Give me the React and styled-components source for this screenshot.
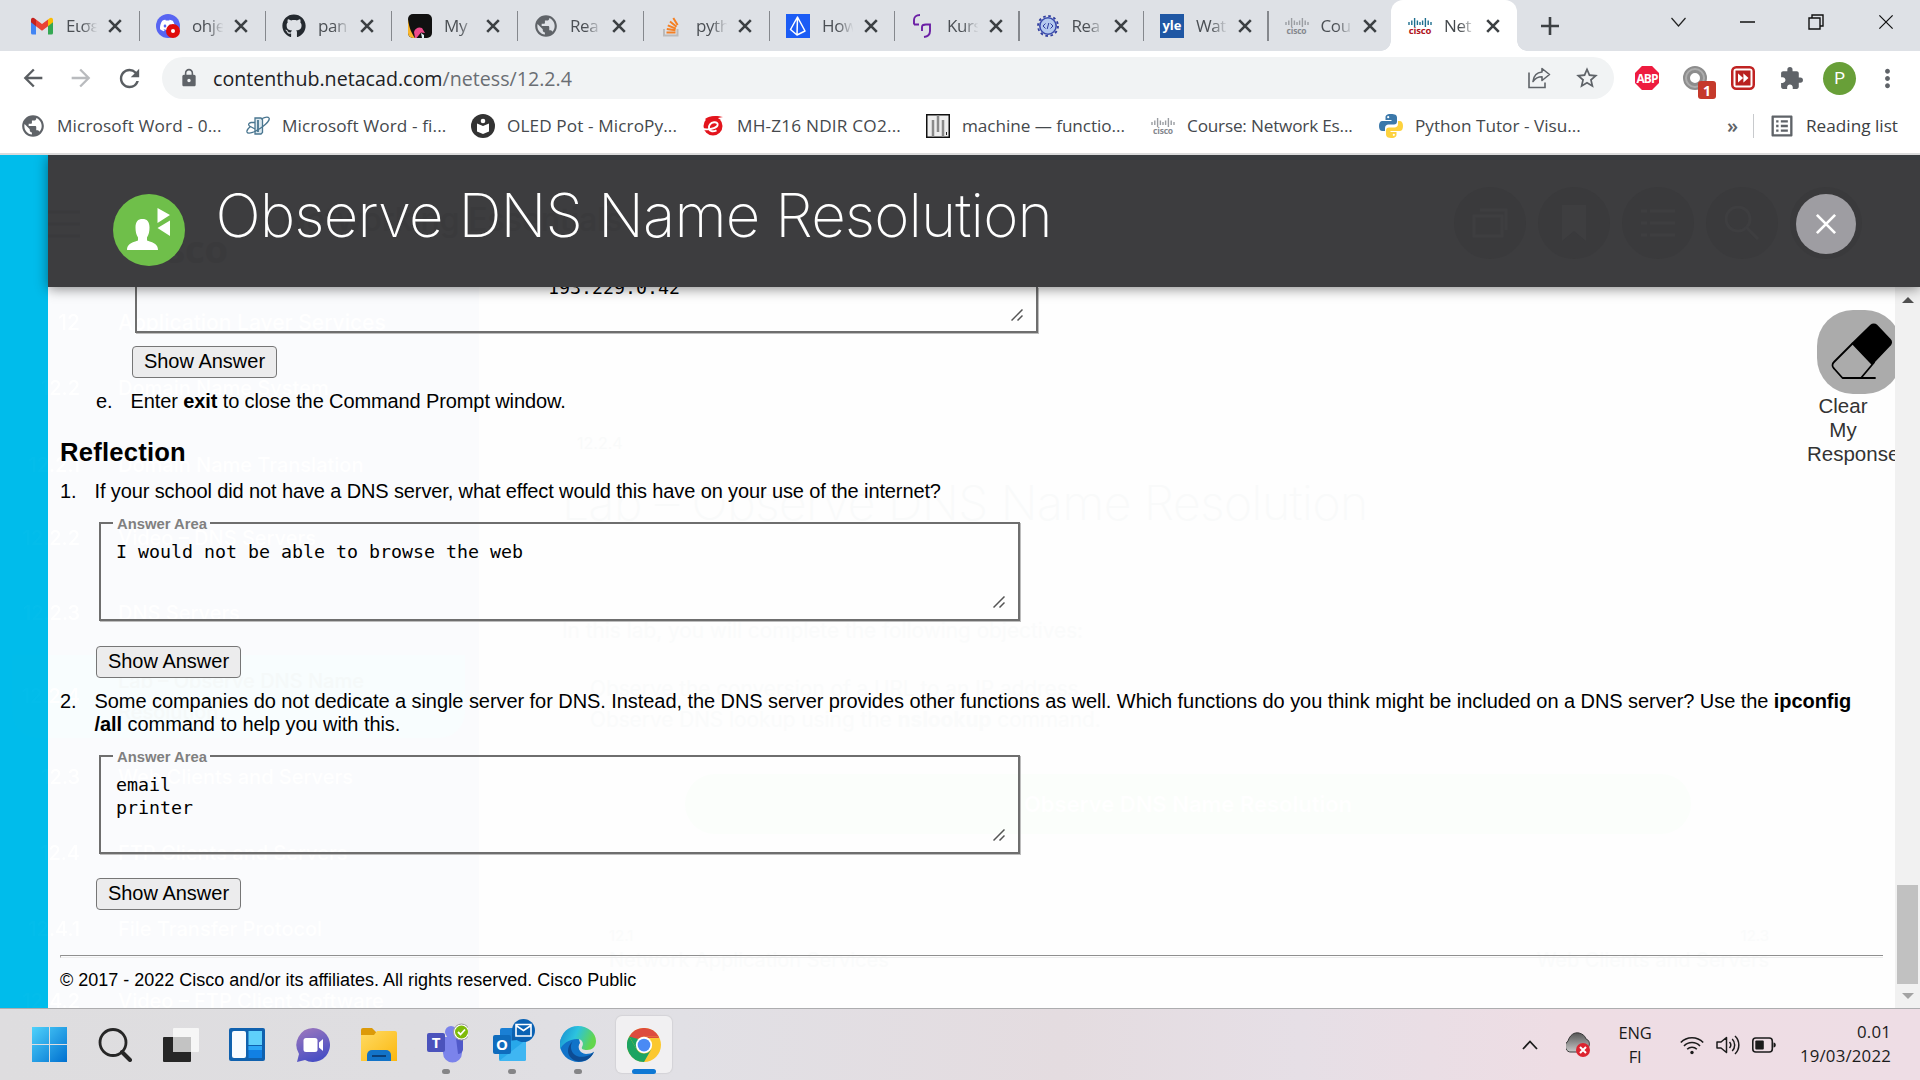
import React from "react";
import styled, { createGlobalStyle } from "styled-components";
import { FaGithub } from "react-icons/fa";
import { MdArrowBack, MdArrowForward, MdRefresh, MdLock, MdStarBorder, MdExtension, MdMoreVert, MdPublic, MdOutlineListAlt } from "react-icons/md";
import { SiDiscord } from "react-icons/si";

const GlobalStyle = createGlobalStyle`
  * { box-sizing: border-box; }
  body { margin: 0; background: #fff; overflow: hidden; }
  svg { display: block; flex: none; }
`;

const ui = `"Open Sans", "Noto Sans", sans-serif`;
const arial = `"Liberation Sans", Arial, sans-serif`;
const mono = `"DejaVu Sans Mono", monospace`;
const inter = `Inter, "Open Sans", sans-serif`;

const Screen = styled.div`
  width: 1920px;
  height: 1080px;
  display: flex;
  flex-direction: column;
  overflow: hidden;
  font-family: ${ui};
`;

/* ---------- browser chrome ---------- */

const TabStrip = styled.div`
  height: 51px;
  background: #dee1e6;
  display: flex;
  padding-left: 13px;
`;

const Tab = styled.div`
  width: ${(p) => p.$w}px;
  height: 51px;
  flex: none;
  position: relative;
  display: flex;
  align-items: center;
  padding-left: 17px;
  background: ${(p) => (p.$active ? "#fff" : "transparent")};
  border-radius: 12px 12px 0 0;
  &::after {
    content: "";
    position: absolute;
    right: -1px;
    top: 11px;
    width: 1.5px;
    height: 30px;
    background: ${(p) => (p.$active || p.$last ? "transparent" : "#85888d")};
  }
`;

const TabCorner = styled.i`
  position: absolute;
  bottom: 0;
  width: 10px;
  height: 10px;
  ${(p) => (p.$left ? "left: -10px;" : "right: -10px;")}
  background: radial-gradient(circle at ${(p) => (p.$left ? "0 0" : "100% 0")}, transparent 9.5px, #fff 10px);
`;

const TabIcon = styled.span`
  width: 24px;
  display: flex;
  justify-content: center;
`;

const TabTitle = styled.span`
  margin-left: 12px;
  width: 31px;
  overflow: hidden;
  white-space: nowrap;
  font-size: 17px;
  line-height: 24px;
  letter-spacing: -0.4px;
  color: ${(p) => (p.$active ? "#45494d" : "#4b4f54")};
  mask-image: linear-gradient(90deg, #000 50%, transparent 102%);
`;

const TabClose = styled.span`
  margin-left: 11px;
`;

const NewTab = styled.div`
  width: 60px;
  margin-left: 3px;
  display: flex;
  align-items: center;
  justify-content: center;
`;

const WindowControls = styled.div`
  margin-left: auto;
  height: 43px;
  display: flex;
  align-items: center;
  gap: 53.5px;
  padding-right: 26.5px;
`;

const Toolbar = styled.div`
  height: 54px;
  display: flex;
  align-items: center;
  background: #fff;
`;

const NavButtons = styled.div`
  width: 162px;
  display: flex;
  gap: 20px;
  padding-left: 19px;
  color: #5a5e62;
`;

const NavButton = styled.span`
  width: 28px;
  color: ${(p) => (p.$off ? "#b9bbbe" : "#5a5e62")};
`;

const Omnibox = styled.div`
  width: 1452px;
  height: 42px;
  border-radius: 21px;
  background: #f1f3f4;
  display: flex;
  align-items: center;
  padding: 0 14px 0 17px;
  color: #5f6368;
`;

const Url = styled.span`
  margin-left: 14px;
  flex: 1;
  padding-top: 1px;
  font-size: 19.65px;
  line-height: 28px;
  color: #6a6e73;
  b { font-weight: 400; color: #202124; }
`;

const OmniActions = styled.span`
  display: flex;
  align-items: center;
  gap: 23px;
`;

const Extensions = styled.div`
  display: flex;
  align-items: center;
  padding-left: 21px;
  color: #5f6368;
`;

const ExtSlot = styled.span`
  width: ${(p) => p.$w || 48}px;
  position: relative;
`;

const AbpBadge = styled.span`
  width: 24px;
  height: 24px;
  display: flex;
  align-items: center;
  justify-content: center;
  background: #ee1c3f;
  clip-path: polygon(29% 0, 71% 0, 100% 29%, 100% 71%, 71% 100%, 29% 100%, 0 71%, 0 29%);
  color: #fff;
  font-size: 12px;
  font-weight: 700;
  letter-spacing: -0.9px;
`;

const CountBadge = styled.span`
  position: absolute;
  left: 15px;
  top: 15px;
  width: 18px;
  height: 18px;
  border-radius: 3px;
  background: #c5392b;
  color: #fff;
  font-size: 14px;
  font-weight: 700;
  line-height: 19px;
  text-align: center;
`;

const Avatar = styled.span`
  display: block;
  width: 33px;
  height: 33px;
  border-radius: 50%;
  background: #689f38;
  color: #fff;
  font: 17px/33px Roboto, sans-serif;
  text-align: center;
`;

const BookmarkBar = styled.div`
  height: 50px;
  display: flex;
  align-items: center;
  padding: 0 0 7px 21px;
  border-bottom: 2px solid #dadbdc;
  background: #fff;
`;

const Bookmark = styled.div`
  width: ${(p) => p.$w}px;
  display: flex;
  align-items: center;
  gap: 12px;
  font-size: 17.2px;
  line-height: 24px;
  letter-spacing: ${(p) => p.$ls}px;
  white-space: nowrap;
  color: #45494d;
`;

const More = styled.span`
  margin-left: 144px;
  width: 26px;
  font-size: 20px;
  line-height: 20px;
  font-weight: 600;
  color: #5f6368;
`;

const ReadingList = styled.div`
  height: 24px;
  padding-left: 14px;
  border-left: 1px solid #c8cacd;
  display: flex;
  align-items: center;
  gap: 10px;
  font-size: 17.2px;
  color: #3c4043;
  white-space: nowrap;
`;

/* ---------- page ---------- */

const Viewport = styled.div`
  height: 853px;
  position: relative;
  overflow: hidden;
  background: #fff;
`;

const Course = styled.div`
  position: absolute;
  inset: 0;
  display: flex;
  font-family: ${inter};
`;

const Sidebar = styled.div`
  width: 479px;
  padding-top: 152px;
  background: linear-gradient(90deg, #00bceb 48px, #fafbfd 48px);
`;

const SideItem = styled.div`
  height: ${(p) => (p.$tall ? 83 : 30)}px;
  margin: ${(p) => p.$gap}px 14px 0 12px;
  border-radius: 0 0 26px 26px;
  display: flex;
  align-items: center;
  background: ${(p) => (p.$tall ? "linear-gradient(90deg, #01bcea 36px, #f8fdfe 36px)" : "transparent")};
  color: ${(p) => (p.$tall ? "#f5f9f9" : "#ffffff")};
  font-size: ${(p) => p.$size || 20}px;
  line-height: 31px;
  font-weight: 500;
`;

const SideNumber = styled.span`
  width: 68px;
  margin-right: 38px;
  text-align: right;
  background: linear-gradient(90deg, #03bdeb 36px, #ffffff 36px);
  background-clip: text;
  color: transparent;
`;

const CourseMain = styled.div`
  flex: 1;
  padding: 278px 150px 0 83px;
  background: #fefefe;
  color: #f9fafa;
`;

const CourseNumber = styled.div`
  padding-left: 15px;
  font-size: 16px;
  line-height: 20px;
`;

const CourseTitle = styled.div`
  margin-top: 15px;
  font-size: 48px;
  font-weight: 200;
  line-height: 70px;
  letter-spacing: -0.45px;
  white-space: nowrap;
`;

const CourseText = styled.div`
  margin-top: ${(p) => p.$gap}px;
  padding-left: ${(p) => p.$indent || 0}px;
  font-size: 20.8px;
  line-height: 31px;
  color: #fafbfb;
`;

const CourseButton = styled.div`
  width: 1006px;
  height: 60px;
  margin: 39px 0 0 123px;
  border-radius: 30px;
  background: #fbfefb;
  color: #ffffff;
  font-size: 22px;
  font-weight: 600;
  line-height: 60px;
  text-align: center;
`;

const CourseNav = styled.div`
  margin-top: 92px;
  padding: 0 1px 0 47px;
  display: flex;
  justify-content: space-between;
  font-size: 20px;
  line-height: 28px;
  color: #fafbfb;
  small { display: block; font-size: 15px; line-height: 20px; }
  div + div { text-align: right; }
`;

const Dialog = styled.div`
  position: absolute;
  inset: 0 0 0 48px;
  display: flex;
  flex-direction: column;
`;

const DialogHeader = styled.div`
  height: 132px;
  position: relative;
  z-index: 1;
  display: flex;
  padding: 39px 64px 0 65px;
  background: linear-gradient(#383c40 5px, #3d3d3f 5px);
  box-shadow: 0 2px 12px rgba(0, 0, 0, 0.45);
`;

const HeaderShade = styled.div`
  position: absolute;
  right: 58px;
  top: 32px;
  display: flex;
  gap: 12px;
`;

const ShadeCircle = styled.span`
  width: 72px;
  height: 72px;
  border-radius: 50%;
  background: #3a3a3c;
  display: flex;
  align-items: center;
  justify-content: center;
`;

const ShadeBrand = styled.div`
  position: absolute;
  left: 0;
  top: 40px;
  display: flex;
  color: #3a3a3c;
  font: 500 32px/50px ${inter};
  gap: 55px;
  white-space: nowrap;
`;

const ShadeLogo = styled.span`
  width: 102px;
  margin-right: -10px;
  padding-top: 23px;
  font: 700 38px/60px ${ui};
`;

const DialogTitle = styled.h1`
  margin: -15px 0 0 30.5px;
  position: relative;
  flex: 1;
  font: 200 60px/72px ${inter};
  letter-spacing: -0.9px;
  color: #fff;
  white-space: nowrap;
`;

const RoundIcon = styled.span`
  position: relative;
  width: 72px;
  height: 72px;
`;

const CloseButton = styled.button`
  position: relative;
  width: 60px;
  height: 60px;
  padding: 0;
  border: 0;
  border-radius: 50%;
  background: #9e9da2;
  display: flex;
  align-items: center;
  justify-content: center;
`;

const DialogBody = styled.div`
  flex: 1;
  min-height: 0;
  display: flex;
`;

const Lab = styled.div`
  width: 1847px;
  position: relative;
  overflow: hidden;
  padding-left: 12px;
  font: 20px/23px ${arial};
  color: #000;
`;

const CutArea = styled.div`
  display: flow-root;
  width: 903px;
  height: 46px;
  margin-left: 75px;
  padding: 0 0 0 411px;
  border: 2px solid #6e6e6e;
  border-top: 0;
  box-shadow: 1px 1px 0 #bdbdbd;
  font: 18.27px/22px ${mono};
  position: relative;
  span { display: block; margin-top: -10px; }
`;

const AnswerButton = styled.button`
  display: block;
  width: 145px;
  height: 32px;
  margin: ${(p) => p.$top}px 0 0 ${(p) => p.$left || 36}px;
  padding: 0 0 2px;
  border: 1px solid #767676;
  border-radius: 4px;
  background: #ececed;
  color: #000;
  font: 20px/28px ${arial};
  white-space: nowrap;
`;

const Item = styled.div`
  display: grid;
  grid-template-columns: 34.5px auto;
  width: 1820px;
  margin: ${(p) => p.$top}px 0 0 ${(p) => p.$left || 0}px;
  letter-spacing: ${(p) => p.$ls || 0}px;
`;

const Heading = styled.h2`
  margin: 24px 0 0;
  font: 700 25.6px/30px ${arial};
  letter-spacing: 0.22px;
`;

const AnswerArea = styled.fieldset`
  width: 921px;
  height: 108px;
  margin: 10px 0 0 39px;
  padding: 7px 0 0 15px;
  border: 2px solid #6e6e6e;
  box-shadow: 1px 1px 0 #bdbdbd;
  position: relative;
  min-width: 0;
  font: 18.27px/23px ${mono};
  white-space: pre;
`;

const Legend = styled.legend`
  margin-left: -3px;
  padding: 2px 3px 0 4px;
  font: 700 14.8px/18px ${arial};
  color: #808080;
`;

const Resizer = styled.svg`
  position: absolute;
  right: 13px;
  bottom: ${(p) => p.$bottom || 11}px;
`;

const Divider = styled.div`
  width: 1823px;
  height: 3px;
  margin-top: 45px;
  border-top: 1px solid #8f8f8f;
  border-left: 1px solid #a8a8a8;
  border-bottom: 1px solid #ededed;
`;

const Copyright = styled.div`
  margin-top: 11px;
  font-size: 18px;
  line-height: 22px;
`;

const ClearResponses = styled.div`
  position: absolute;
  left: 1759px;
  top: 23px;
  width: 72px;
  display: flex;
  flex-direction: column;
  font-size: 20.5px;
  line-height: 24px;
  color: #333;
  text-align: center;
`;

const EraserPad = styled.span`
  width: 84px;
  height: 84px;
  margin-left: 10px;
  padding: 2px 0 0 5px;
  flex: none;
  border-radius: 36px;
  background: #ababab;
  display: flex;
  align-items: center;
  justify-content: center;
`;

const Scrollbar = styled.div`
  width: 25px;
  background: #f1f1f1;
  display: flex;
  flex-direction: column;
  align-items: center;
  padding: 10px 0 9px;
`;

const Arrow = styled.span`
  border: 6px solid transparent;
  ${(p) => (p.$up ? "border-top: 0; border-bottom: 6px solid #505050;" : "border-bottom: 0; border-top: 6px solid #a3a3a3;")}
`;

const Thumb = styled.span`
  width: 21px;
  height: 99px;
  margin: auto 0 9px;
  background: #c1c1c1;
`;

/* ---------- taskbar ---------- */

const Taskbar = styled.div`
  height: 72px;
  display: flex;
  border-top: 1px solid #adadaf;
  background: linear-gradient(90deg, #dedddf 0, #dfdee1 420px, #e1e0e5 680px, #e4dce0 1060px, #e6dfe6 1300px, #eedde4 1560px, #eedde5 100%);
`;

const Apps = styled.div`
  display: flex;
  padding: 7px 0 0 21px;
  gap: 10.1px;
`;

const AppButton = styled.div`
  width: 56px;
  height: 57px;
  position: relative;
  display: flex;
  align-items: center;
  justify-content: center;
  padding-bottom: ${(p) => p.$lift || 0}px;
  border-radius: 6px;
  background: ${(p) => (p.$active ? "#f1f0f2" : "transparent")};
  box-shadow: ${(p) => (p.$active ? "0 0 1px 1px #d4d3d7" : "none")};
  &::after {
    content: "";
    position: absolute;
    bottom: -1px;
    width: ${(p) => (p.$active ? 24 : 8)}px;
    height: 5px;
    border-radius: 3px;
    background: ${(p) => (p.$active ? "#0f78d4" : p.$running ? "#858587" : "transparent")};
  }
`;

const Tray = styled.div`
  margin-left: auto;
  padding-right: 29px;
  display: flex;
  align-items: center;
  color: #1b1b1b;
  font-size: 16.5px;
  line-height: 24px;
  letter-spacing: -0.2px;
`;

const TrayCloud = styled.span`
  margin-left: 28px;
`;

const Lang = styled.div`
  width: 46px;
  margin: 0 22px 0 22px;
  text-align: center;
`;

const Status = styled.div`
  display: flex;
  gap: 12px;
`;

const Clock = styled.div`
  width: 115px;
  text-align: right;
  white-space: nowrap;
  padding-bottom: 2px;
  font-size: 16.8px;
  letter-spacing: 0.2px;
`;

/* ---------- drawings ---------- */

const Cross = ({ s = 14, w = 2.6, c = "#3c4043" }) => (
  <svg width={s} height={s} viewBox="0 0 14 14"><path d="M1.2 1.2 12.8 12.8M12.8 1.2 1.2 12.8" stroke={c} strokeWidth={w} /></svg>
);

const Gmail = () => (
  <svg width="24" height="24" viewBox="0 0 24 24">
    <path d="M1 6.5V19a1.6 1.6 0 0 0 1.6 1.6H6V11z" fill="#4285f4" />
    <path d="M23 6.5V19a1.6 1.6 0 0 1-1.6 1.6H18V11z" fill="#34a853" />
    <path d="M18 5.6 20 4a2 2 0 0 1 3 1.8V8.300l-5 4z" fill="#fbbc04" />
    <path d="M6 5.600 4 4a2 2 0 0 0-3 1.800V8.300l5 4z" fill="#c5221f" />
    <path d="M6 12.200V5.500l6 4.600 6-4.600v6.700l-6 4.600z" fill="#ea4335" />
  </svg>
);

const DiscordTab = () => (
  <svg width="24" height="24" viewBox="0 0 24 24">
    <circle cx="12" cy="12" r="12" fill="#5865f2" />
    <SiDiscord x="4" y="4" size={15} color="#fff" />
    <circle cx="17" cy="17" r="7" fill="#e00b0b" /><circle cx="17" cy="17" r="2" fill="#fff" />
  </svg>
);

const MyIcon = () => (
  <svg width="24" height="24" viewBox="0 0 24 24">
    <rect width="24" height="24" rx="5" fill="#111" />
    <path d="M0 5C1 14 4 20 7 24H5a5 5 0 0 1-5-5z" fill="#f9b52a" />
    <path d="M6 18c1-4 5-5.500 8-4l3 5-4-.5L8.500 24H7z" fill="#ee4b8b" /><path d="M13 19l3 2v3h-2z" fill="#dff1f5" />
  </svg>
);

const StackIcon = () => (
  <svg width="24" height="24" viewBox="0 0 24 24" fill="none">
    <path d="M4 15v6.500h13.500V15" stroke="#bcbbbb" strokeWidth="2" />
    <path d="M6.500 18.500h9M6.800 15l8.700 1.200M7.800 11.300l8 3.300M10 7.500l6.500 5.300M13.300 4l4.300 7" stroke="#f48024" strokeWidth="2" />
  </svg>
);

const Prism = () => (
  <svg width="24" height="24" viewBox="0 0 24 24"><rect width="24" height="24" fill="#1b5cf5" />
    <path d="M11.500 3 4.500 15.500 11 21l8-4zM11.500 3 11 21" fill="none" stroke="#fff" strokeWidth="1.500" strokeLinejoin="round" /></svg>
);

const Kurssi = () => (
  <svg width="24" height="24" viewBox="0 0 24 24" fill="none" stroke="#6b1fa5" strokeWidth="1.900">
    <path d="M9 1C5 1 3 3 3 6v4.500M3 10.500h5M11 17v-4c0-2 1-2.500 4-2.500M15 10.500h4V17c0 4-2 5.500-6 6" />
  </svg>
);

const Gear = () => (
  <svg width="24" height="24" viewBox="0 0 24 24">
    <circle cx="12" cy="12" r="10" fill="none" stroke="#2f3c9e" strokeWidth="1.800" strokeDasharray="2.600 2.636" />
    <circle cx="12" cy="12" r="8.200" fill="#b4c9ee" stroke="#3a4cad" strokeWidth="1.600" />
    <path d="m9.500 9.500-2.500 2.500 2.500 2.500M14.500 9.500l2.500 2.500-2.500 2.500M12.800 9l-1.600 6" stroke="#2f3c9e" fill="none" />
  </svg>
);

const YleBox = styled.span`
  width: 24px;
  height: 24px;
  flex: none;
  background: #1f57a4;
  color: #fff;
  font: 700 13px/22px ${ui};
  text-align: center;
`;

const CiscoMark = styled.span`
  width: 24px;
  height: 24px;
  flex: none;
  display: flex;
  flex-direction: column;
  align-items: center;
  padding-top: 4px;
  color: ${(p) => (p.$red ? "#b0141c" : "#85888e")};
  font: 700 ${(p) => (p.$red ? 9.5 : 8.5)}px/8px ${ui};
  letter-spacing: -0.2px;
`;

const Cisco = ({ red }) => (
  <CiscoMark $red={red}>
    <svg width="24" height="9" viewBox="0 0 24 9">
      <path d="M1 4v3M3.800 2.500V7M6.600 0v9M9.400 2.500V7M12 4v3M14.600 2.500V7M17.400 0v9M20.200 2.500V7M23 4v3" stroke={red ? "#1f6f8f" : "#9a9da2"} strokeWidth="1.400" />
    </svg>
    cisco
  </CiscoMark>
);

const WordTwo = () => (
  <svg width="24" height="24" viewBox="0 0 24 24" fill="none" stroke="#4a7690" strokeWidth="1.300">
    <path d="M9 4h6l1.500 1.500v13L15 20H9z" fill="#dbe8ef" /><path d="M12 6v12" strokeWidth="1.800" />
    <path d="M9 8.500H5C2.500 9 2 10.500 3.500 12L9 15M1 18c1 3 9-.5 14.500-4.500S24 5.500 23 4s-5-.5-8 1M1 18c-.5-2 1.500-4 3.500-5.500" />
  </svg>
);

const Oled = () => (
  <svg width="24" height="24" viewBox="0 0 24 24"><circle cx="12" cy="12" r="12" fill="#333" />
    <circle cx="12" cy="7" r="2.300" fill="#fff" /><path d="M6 9.500 12 12l6-2.500v8L12 20l-6-2.500z" fill="#fff" /></svg>
);

const RedE = () => (
  <svg width="24" height="24" viewBox="0 0 24 24"><circle cx="12" cy="12" r="9.500" fill="#e3141c" />
    <path d="M22 3C17 1.500 8 1 4 5l3 2c4-2 10-3 15-4z" fill="#e3141c" />
    <path d="M1.500 15c6 1 13.500-.5 15-3.500.8-2-1-3.500-3.500-3.200-3.500.4-5.500 3.200-5 6s3.500 4 7.500 2" fill="none" stroke="#fff" strokeWidth="1.900" /></svg>
);

const Machine = () => (
  <svg width="24" height="24" viewBox="0 0 24 24"><rect x=".75" y=".75" width="22.500" height="22.500" fill="#eee" stroke="#111" strokeWidth="1.500" />
    <path d="M7 6v17M12 1v17M17 6v17" stroke="#8a8a8a" strokeWidth="2.500" /><path d="M20.500 18v3" stroke="#222" /></svg>
);

const Python = () => (
  <svg width="24" height="24" viewBox="0 0 24 24">
    <path d="M11.800 0C7 0 6.500 2 6.500 3.500V6h6v1H3.500C1 7 0 9 0 12s1 5 3.500 5H6v-3c0-2 1.500-3.500 3.500-3.500h5.500c1.800 0 3-1.300 3-3v-4C18 1 16 0 11.800 0z" fill="#3b78aa" />
    <path d="M12.200 24c4.800 0 5.300-2 5.300-3.500V18h-6v-1h9c2.500 0 3.500-2 3.500-5s-1-5-3.500-5H19v3c0 2-1.500 3.500-3.500 3.500H10c-1.800 0-3 1.300-3 3v4C7 23 9 24 12.200 24z" fill="#fdd23e" />
    <circle cx="9.200" cy="3.200" r="1.100" fill="#fff" /><circle cx="14.800" cy="20.800" r="1.100" fill="#fff" />
  </svg>
);

const Share = () => (
  <svg width="24" height="24" viewBox="0 0 24 24" fill="none" stroke="#5f6368" strokeWidth="1.600">
    <path d="M2 6.500v15h16v-5" /><path d="M15 2.500 22.500 8.500 15 14.500v-3.700C11 10.800 8.500 12 6 15.500c.5-5 3.500-9 9-9.500z" strokeLinejoin="round" />
  </svg>
);

const Ring = () => (
  <svg width="24" height="24" viewBox="0 0 24 24"><circle cx="12" cy="12" r="8.500" fill="none" stroke="#8d8d8d" strokeWidth="7" /><circle cx="12" cy="12" r="9" fill="none" stroke="#adadad" strokeWidth="2" /></svg>
);

const FastForward = () => (
  <svg width="24" height="24" viewBox="0 0 24 24"><rect x="1.250" y="1.250" width="21.500" height="21.500" rx="4" fill="#fff" stroke="#c02322" strokeWidth="2.500" /><path d="m6 6 6 6-6 6zM12.500 6l6.500 6-6.500 6z" fill="#b9201f" /><path d="M4.500 4.500h15v15h-15zm2.500 3v9l5-4.500zm5.500 0v9l5-4.500z" fill="#b9201f" fillRule="evenodd" /><path d="m7 7.500 5 4.500-5 4.500zM12.500 7.500l5 4.500-5 4.500z" fill="#fff" /></svg>
);

const ResizeGrip = ({ bottom }) => (
  <Resizer $bottom={bottom} width="12" height="12" viewBox="0 0 12 12"><path d="M.5 11.500 11.500.5M6.500 11.500l5-5" stroke="#555" strokeWidth="1.500" /></Resizer>
);

const Person = () => (
  <svg width="72" height="72" viewBox="0 0 72 72">
    <circle cx="36" cy="36" r="36" fill="#6fbf4a" />
    <path d="M14 56c0-5 3-7 11-9.500v-3c-1.800-3-2.500-6-2.500-10 0-6 2.500-8.500 7-8.500s7 2.500 7 8.500c0 4-.7 7-2.500 10v3C42 49 45 51 45 56z" fill="#fff" />
    <path d="M44.500 14v15L57 21zM57 26.500v15.500L44.500 34z" fill="#fff" />
  </svg>
);

const Eraser = () => (
  <svg width="64" height="60" viewBox="0 0 64 60" fill="none" stroke="#000" strokeWidth="1.800" strokeLinejoin="round">
    <path d="M41 2.500c1.500-1.500 4-1.500 5.500 0l13.500 14c1.500 1.500 1.500 4 0 5.500L42 41 22.500 20.500z" fill="#000" />
    <path d="M22.500 20.500 4 39c-2 2-2 4.500 0 6.500L12.500 55H31l13-15.500M31 55h14" strokeLinecap="round" />
  </svg>
);

const WinLogo = () => (
  <svg width="35" height="35" viewBox="0 0 35 35">
    <defs><linearGradient id="win" x2="1" y2="1"><stop stopColor="#4fd2fb" /><stop offset="1" stopColor="#0070d0" /></linearGradient></defs>
    <path d="M0 0h17v17H0zM18 0h17v17H18zM0 18h17v17H0zM18 18h17v17H18z" fill="url(#win)" />
  </svg>
);

const Search = () => (
  <svg width="34" height="34" viewBox="0 0 34 34" fill="none" stroke="#262626"><circle cx="15" cy="14.500" r="13" strokeWidth="2.800" /><path d="m24 24 8 8" strokeWidth="4" strokeLinecap="round" /></svg>
);

const TaskView = () => (
  <svg width="36" height="34" viewBox="0 0 36 34"><rect x="0" y="9" width="28" height="25" rx="1" fill="#262626" /><rect x="10" y="0" width="26" height="24" rx="1" fill="#f6f6f6" /><rect x="10" y="9" width="18" height="15" fill="#c3c3c3" /></svg>
);

const Widgets = () => (
  <svg width="36" height="33" viewBox="0 0 36 33"><rect width="36" height="33" rx="2" fill="#1061ae" /><rect x="3" y="3" width="14" height="27" rx="2" fill="#f8fbff" /><rect x="19.500" y="3" width="13.500" height="14" fill="#5fd0fb" /><path d="M19.500 18H33v12H19.500z" fill="#1180e4" /><path d="M19.500 18H33v4H19.500z" fill="#2ba6f6" /></svg>
);

const Chat = () => (
  <svg width="34" height="34" viewBox="0 0 34 34">
    <defs><linearGradient id="chat" x2=".4" y2="1"><stop stopColor="#a079bd" /><stop offset="1" stopColor="#4b50c4" /></linearGradient></defs>
    <path d="M17 0a17 17 0 1 1-8 32L1 34l2-8A17 17 0 0 1 17 0z" fill="url(#chat)" /><rect x="7.500" y="10" width="14" height="14" rx="2.500" fill="#fff" /><path d="M23 14.500 27 11v12l-4-3.500z" fill="#fff" />
  </svg>
);

const Explorer = () => (
  <svg width="36" height="33" viewBox="0 0 36 33">
    <defs><linearGradient id="folder" x2="1" y2="1"><stop stopColor="#ffdb64" /><stop offset="1" stopColor="#fbb70f" /></linearGradient></defs>
    <path d="M0 2a2 2 0 0 1 2-2h9l4 4v7H0z" fill="#dc9a09" /><path d="M0 7h13l3-4h18a2 2 0 0 1 2 2v28H0z" fill="url(#folder)" />
    <path d="M6 33v-6a5 5 0 0 1 5-5h14a5 5 0 0 1 5 5v6z" fill="#1273c8" /><path d="M11 28h14" stroke="#0a3f78" strokeWidth="2" />
  </svg>
);

const Letter = styled.text`
  font: 700 15px ${ui};
  fill: #fff;
  text-anchor: middle;
`;

const Teams = () => (
  <svg width="44" height="40" viewBox="0 0 44 40">
    <circle cx="27" cy="9" r="6" fill="#7b83eb" /><path d="M18 14h20v16a9.500 9.500 0 0 1-19 0z" fill="#7b83eb" /><path d="M32 15h7v10a5 5 0 0 1-5 6z" fill="#5059c9" />
    <rect x="3" y="10" width="18" height="19" rx="2" fill="#4b53bc" /><Letter x="12" y="25">T</Letter>
    <circle cx="37.500" cy="9" r="8" fill="#fff" stroke="#999" /><circle cx="37.500" cy="9" r="6.500" fill="#7fba0a" /><path d="m34 9 2.500 2.500 4.500-5" stroke="#fff" strokeWidth="1.800" fill="none" />
  </svg>
);

const Outlook = () => (
  <svg width="46" height="44" viewBox="2 0 46 44">
    <rect x="13" y="9" width="24" height="22" rx="2" fill="#1a7fd4" /><path d="M25 13h12v12H25z" fill="#0f5ea8" />
    <path d="M12 23 39 20v20a2 2 0 0 1-2 2H14a2 2 0 0 1-2-2z" fill="#28a8ea" /><path d="m39 21-27 21h25a2 2 0 0 0 2-2z" fill="#3fb6f2" />
    <rect x="6" y="16" width="18" height="19" rx="2" fill="#0f6cbd" /><Letter x="15" y="31">O</Letter>
    <circle cx="36.500" cy="11.500" r="11.500" fill="#0a62b4" /><path d="M29 5.500h15V17H29zm0 1 7.500 5 7.500-5" fill="none" stroke="#fff" strokeWidth="1.600" />
  </svg>
);

const Edge = () => (
  <svg width="36" height="36" viewBox="0 0 36 36">
    <defs><linearGradient id="edge" x2="1" y2=".3"><stop stopColor="#178bd0" /><stop offset=".5" stopColor="#2cc3df" /><stop offset="1" stopColor="#62d64c" /></linearGradient></defs>
    <path d="M0 18C0 8 8 5 18 9l2 8c-3 4-1 10 6 11 3 0 6-1 8-2-3 6-8 10-15 10C8 36 0 28 0 18z" fill="#1173c9" />
    <path d="M0 17C1 7 8 0 18 0s18 7 18 15c0 6-4 9-9 9-4 0-6-1-5-3 2-3 1-8-5-8C9 13 2 18 0 24z" fill="url(#edge)" />
    <path d="M13 15c-5 6-1 18 12 15.500 4-.5 7-2.500 9-5C31 33 24 37 16 35c-9-3-11-13-3-20z" fill="#0d4c94" />
  </svg>
);

const Chrome = () => (
  <svg width="34" height="34" viewBox="0 0 48 48">
    <circle cx="24" cy="24" r="24" fill="#fbc830" />
    <path d="M3.200 12A24 24 0 0 1 44.800 12H24a12 12 0 0 0-10.400 6z" fill="#dd4b3e" />
    <path d="M3.200 12A24 24 0 0 0 24 48l10.400-18A12 12 0 0 1 13.600 30z" fill="#1da462" />
    <path d="M3.200 12 13.600 30 17 16z" fill="#1da462" /><path d="M3.200 12h41.600L45 14H17z" fill="#dd4b3e" />
    <circle cx="24" cy="24" r="11.500" fill="#fff" /><circle cx="24" cy="24" r="9" fill="#4a8af4" />
  </svg>
);

const Cloud = () => (
  <svg width="24" height="26" viewBox="0 0 24 26">
    <defs><linearGradient id="cloud" x2="0" y2="1"><stop stopColor="#555" /><stop offset="1" stopColor="#c9c9c9" /></linearGradient></defs>
    <path d="M6 20a6 6 0 0 1-4-11C4 3 8 0 13 1c4 1 6 3 7 6 3 1 4 4 3 7s-3 6-6 6z" fill="url(#cloud)" stroke="#3a3a3a" /><circle cx="17" cy="18" r="7" fill="#dc2430" /><path d="m14 15 6 6m0-6-6 6" stroke="#fff" strokeWidth="2" /></svg>
);

const Wifi = () => (
  <svg width="24" height="20" viewBox="0 0 24 20" fill="none" stroke="#1b1b1b" strokeWidth="1.600"><path d="M.8 7.500a15.500 15.500 0 0 1 22.400 0M4 11a11 11 0 0 1 16 0M7.200 14.300a6.700 6.700 0 0 1 9.600 0" /><circle cx="12" cy="17.500" r="1.700" fill="#1b1b1b" stroke="none" /></svg>
);

const Speaker = () => (
  <svg width="24" height="20" viewBox="0 0 24 20" fill="none" stroke="#1b1b1b" strokeWidth="1.500"><path d="M1 7v6h4l5.500 4.500v-15L5 7z" strokeLinejoin="round" /><path d="M13.500 7a4.500 4.500 0 0 1 0 6M16.200 4a8.500 8.500 0 0 1 0 12M19 1a12.500 12.500 0 0 1 0 18" /></svg>
);

const Battery = () => (
  <svg width="24" height="20" viewBox="0 0 24 20"><rect x=".8" y="3" width="19.500" height="14" rx="3" fill="none" stroke="#1b1b1b" strokeWidth="1.600" /><rect x="3.300" y="5.500" width="8.500" height="9" rx="1" fill="#1b1b1b" /><path d="M21.500 7.500v5c3 0 3-5 0-5z" fill="#1b1b1b" /></svg>
);

const tabs = [
  [<Gmail />, "Εισε", 126],
  [<DiscordTab />, "ohje", 126],
  [<FaGithub size={24} color="#24292f" />, "pan", 126],
  [<MyIcon />, "My", 126],
  [<MdPublic size={26} color="#5f6368" />, "Rea", 126],
  [<StackIcon />, "pyth", 126],
  [<Prism />, "How", 125],
  [<Kurssi />, "Kurs", 124.5],
  [<Gear />, "Rea", 124.5],
  [<YleBox>yle</YleBox>, "Wat", 124.5],
  [<Cisco />, "Cou", 123.5],
  [<Cisco red />, "Net", 126],
];

const bookmarks = [
  [<TabIcon><MdPublic size={26} color="#5f6368" /></TabIcon>, "Microsoft Word - 0...", 225, 0.13],
  [<WordTwo />, "Microsoft Word - fi...", 225, 0.1],
  [<Oled />, "OLED Pot - MicroPy...", 230, 0.1],
  [<RedE />, "MH-Z16 NDIR CO2...", 225, 0.2],
  [<Machine />, "machine — functio...", 225, -0.07],
  [<Cisco />, "Course: Network Es...", 228, -0.2],
  [<Python />, "Python Tutor - Visu...", 204, 0],
];

const sideItems = [
  ["12", "Application Layer Services", 0, 21],
  ["12.2", "Domain Name System", 36],
  ["12.2.1", "Domain Name Translation", 47],
  ["12.2.2", "Video – DNS Servers", 43],
  ["12.2.3", "DNS Servers", 45],
];
const sideItemsAfter = [
  ["12.3", "Web Clients and Servers", 24],
  ["12.4", "FTP Clients and Servers", 46],
  ["12.4.1", "File Transfer Protocol", 46],
  ["12.4.2", "Video – FTP Client Software", 42],
];

const SideRows = ({ rows }) => rows.map(([n, label, gap, size]) => (
  <SideItem key={n} $gap={gap} $size={size}><SideNumber>{n}</SideNumber>{label}</SideItem>
));

function BrowserChrome() {
  return (
    <>
      <TabStrip>
        {tabs.map(([icon, title, w], i) => {
          const active = i === tabs.length - 1;
          return (
            <Tab key={i} $w={w} $active={active} $last={i === tabs.length - 2}>
              {active && <><TabCorner $left /><TabCorner /></>}
              <TabIcon>{icon}</TabIcon>
              <TabTitle $active={active}>{title}</TabTitle>
              <TabClose><Cross /></TabClose>
            </Tab>
          );
        })}
        <NewTab><svg width="18" height="18" viewBox="0 0 18 18"><path d="M9 0v18M0 9h18" stroke="#3c4043" strokeWidth="2.600" /></svg></NewTab>
        <WindowControls>
          <svg width="15" height="10" viewBox="0 0 15 10"><path d="M.5 1l7 8 7-8" fill="none" stroke="#222" strokeWidth="1.200" /></svg>
          <svg width="15" height="2" viewBox="0 0 15 2"><path d="M0 1h15" stroke="#111" strokeWidth="1.500" /></svg>
          <svg width="16" height="16" viewBox="0 0 16 16" fill="none" stroke="#111" strokeWidth="1.400"><path d="M1 4h11v11H1zM4 4V1h11v11h-3" /></svg>
          <Cross s={16} w={1.1} c="#111" />
        </WindowControls>
      </TabStrip>
      <Toolbar>
        <NavButtons>
          <NavButton><MdArrowBack size={28} /></NavButton>
          <NavButton $off><MdArrowForward size={28} /></NavButton>
          <NavButton><MdRefresh size={29} /></NavButton>
        </NavButtons>
        <Omnibox>
          <MdLock size={20} />
          <Url><b>contenthub.netacad.com</b>/netess/12.2.4</Url>
          <OmniActions><Share /><MdStarBorder size={26} /></OmniActions>
        </Omnibox>
        <Extensions>
          <ExtSlot><AbpBadge>ABP</AbpBadge></ExtSlot>
          <ExtSlot><Ring /><CountBadge>1</CountBadge></ExtSlot>
          <ExtSlot><FastForward /></ExtSlot>
          <ExtSlot $w={44}><MdExtension size={25} /></ExtSlot>
          <ExtSlot $w={50}><Avatar>P</Avatar></ExtSlot>
          <MdMoreVert size={29} />
        </Extensions>
      </Toolbar>
      <BookmarkBar>
        {bookmarks.map(([icon, label, w, ls]) => <Bookmark key={label} $w={w} $ls={ls}>{icon}{label}</Bookmark>)}
        <More>»</More>
        <ReadingList><MdOutlineListAlt size={28} color="#5f6368" />Reading list</ReadingList>
      </BookmarkBar>
    </>
  );
}

function CoursePage() {
  return (
    <Course>
      <Sidebar>
        <SideRows rows={sideItems} />
        <SideItem $tall $gap={27}><SideNumber>12.2.4</SideNumber><span>Lab – Observe DNS Name<br />Resolution</span></SideItem>
        <SideRows rows={sideItemsAfter} />
      </Sidebar>
      <CourseMain>
        <CourseNumber>12.2.4</CourseNumber>
        <CourseTitle>Lab – Observe DNS Name Resolution</CourseTitle>
        <CourseText $gap={77}>In this lab, you will complete the following objectives:</CourseText>
        <CourseText $gap={27} $indent={28}>Observe the conversion of a URL to an IP address</CourseText>
        <CourseText $gap={0} $indent={28}>Observe DNS lookup using the <b>nslookup</b> command.</CourseText>
        <CourseButton>Observe DNS Name Resolution</CourseButton>
        <CourseNav>
          <div><small>12.1</small>Network Application Services</div>
          <div><small>12.3</small>Web Clients and Servers</div>
        </CourseNav>
      </CourseMain>
    </Course>
  );
}

function LabDialog() {
  return (
    <Dialog>
      <DialogHeader>
        <ShadeBrand>
          <svg width="32" height="50" viewBox="0 0 32 50"><path d="M0 17h32M0 29h32M0 41h32" stroke="#3a3a3c" strokeWidth="2.500" /></svg>
          <ShadeLogo>cisco</ShadeLogo>
          <span>Networking Essentials</span>
        </ShadeBrand>
        <HeaderShade>
          <ShadeCircle><svg width="36" height="30" viewBox="0 0 36 30" fill="none" stroke="#3e3e40" strokeWidth="3"><path d="M2 8h28v20H2zM8 2h26v20" /></svg></ShadeCircle>
          <ShadeCircle><svg width="24" height="36" viewBox="0 0 24 36"><path d="M0 0h24v36L12 26 0 36z" fill="#3e3e40" /></svg></ShadeCircle>
          <ShadeCircle><svg width="34" height="30" viewBox="0 0 34 30"><path d="M0 3h6M9 3h25M0 15h6M9 15h25M0 27h6M9 27h25" stroke="#3e3e40" strokeWidth="3" /></svg></ShadeCircle>
          <ShadeCircle><svg width="34" height="34" viewBox="0 0 34 34" fill="none" stroke="#3e3e40" strokeWidth="3"><circle cx="13" cy="13" r="12" /><path d="m21 21 12 12" /></svg></ShadeCircle>
          <ShadeCircle />
        </HeaderShade>
        <RoundIcon><Person /></RoundIcon>
        <DialogTitle>Observe DNS Name Resolution</DialogTitle>
        <CloseButton><Cross s={22} w={1.7} c="#fff" /></CloseButton>
      </DialogHeader>
      <DialogBody>
        <Lab>
          <CutArea><span>193.229.0.42</span><ResizeGrip bottom={10} /></CutArea>
          <AnswerButton $top={13} $left={72}>Show Answer</AnswerButton>
          <Item $top={12} $left={36} $ls={-0.11}><span>e.</span><span>Enter <b>exit</b> to close the Command Prompt window.</span></Item>
          <Heading>Reflection</Heading>
          <Item $top={13} $ls={-0.118}><span>1.</span><span>If your school did not have a DNS server, what effect would this have on your use of the internet?</span></Item>
          <AnswerArea><Legend>Answer Area</Legend>I would not be able to browse the web<ResizeGrip /></AnswerArea>
          <AnswerButton $top={25}>Show Answer</AnswerButton>
          <Item $top={12} $ls={-0.062}><span>2.</span><span>Some companies do not dedicate a single server for DNS. Instead, the DNS server provides other functions as well. Which functions do you think might be included on a DNS server? Use the <b>ipconfig<br />/all</b> command to help you with this.</span></Item>
          <AnswerArea><Legend>Answer Area</Legend>{"email\nprinter"}<ResizeGrip /></AnswerArea>
          <AnswerButton $top={24}>Show Answer</AnswerButton>
          <Divider />
          <Copyright>© 2017 - 2022 Cisco and/or its affiliates. All rights reserved. Cisco Public</Copyright>
          <ClearResponses>
            <EraserPad><Eraser /></EraserPad>
            <span>Clear<br />My<br />Responses</span>
          </ClearResponses>
        </Lab>
        <Scrollbar><Arrow $up /><Thumb /><Arrow /></Scrollbar>
      </DialogBody>
    </Dialog>
  );
}

function WindowsTaskbar() {
  return (
    <Taskbar>
      <Apps>
        <AppButton><WinLogo /></AppButton>
        <AppButton><Search /></AppButton>
        <AppButton><TaskView /></AppButton>
        <AppButton><Widgets /></AppButton>
        <AppButton><Chat /></AppButton>
        <AppButton><Explorer /></AppButton>
        <AppButton $running $lift={3}><Teams /></AppButton>
        <AppButton $running $lift={8}><Outlook /></AppButton>
        <AppButton $running $lift={1}><Edge /></AppButton>
        <AppButton $active><Chrome /></AppButton>
      </Apps>
      <Tray>
        <svg width="16" height="10" viewBox="0 0 16 10"><path d="m1 9 7-7.500L15 9" fill="none" stroke="#1b1b1b" strokeWidth="1.800" /></svg>
        <TrayCloud><Cloud /></TrayCloud>
        <Lang>ENG<br />FI</Lang>
        <Status><Wifi /><Speaker /><Battery /></Status>
        <Clock>0.01<br />19/03/2022</Clock>
      </Tray>
    </Taskbar>
  );
}

export default function App() {
  return (
    <Screen>
      <GlobalStyle />
      <BrowserChrome />
      <Viewport>
        <CoursePage />
        <LabDialog />
      </Viewport>
      <WindowsTaskbar />
    </Screen>
  );
}
